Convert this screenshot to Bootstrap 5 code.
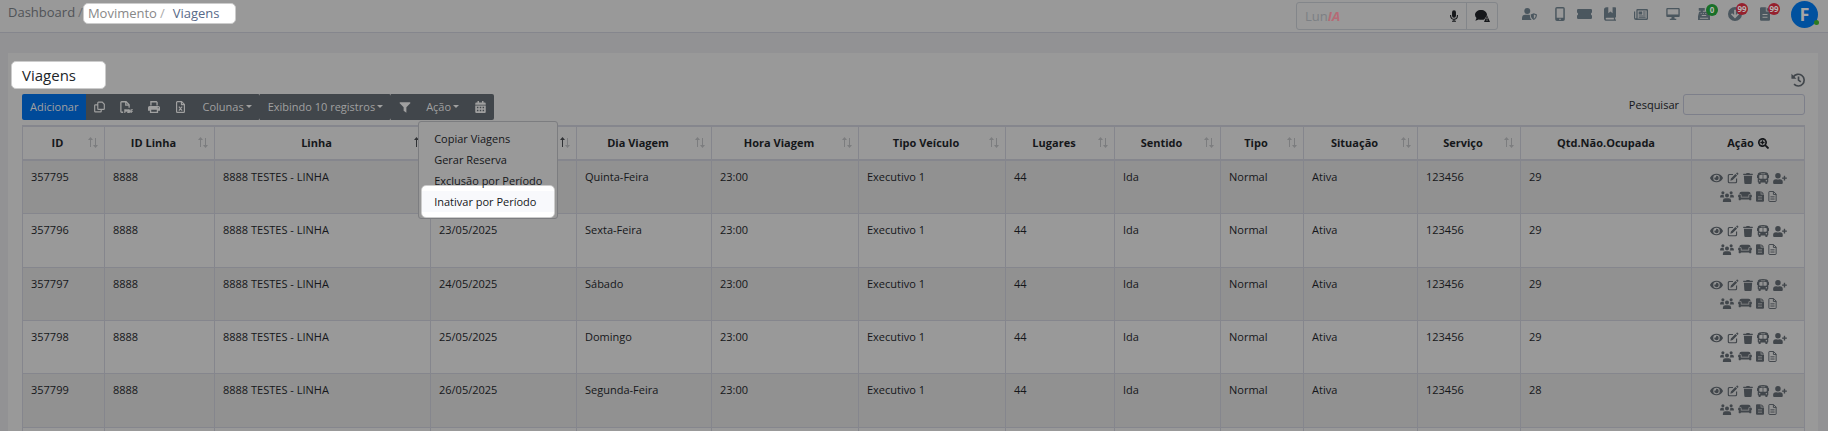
<!DOCTYPE html>
<html lang="pt-BR">
<head>
<meta charset="utf-8">
<meta name="viewport" content="width=device-width, initial-scale=1">
<title>Viagens</title>
<link href="https://cdn.jsdelivr.net/npm/bootstrap@5.3.0/dist/css/bootstrap.min.css" rel="stylesheet">
<style>
  :root { --dim: #999; --page: #929294; --line: #85868d; --ink: #15171a; --icon: #4b575f; --act: #41464b; }
  body { font-family: "Open Sans", sans-serif; font-size: 11px; line-height: 16px; color: var(--ink); background: var(--page); }
  svg { display: block; fill: currentColor; flex: none; }
  .spot { background: #fff; border: 1px solid #ccc; border-radius: 5px; }

  /* top bar */
  .topbar { background: var(--dim); border-bottom: 1px solid var(--line); padding: 0 10px 0 8px; height: 33px; }
  .crumbs { font-size: 13px; line-height: 19px; padding-top: 3px; }
  .crumbs a { text-decoration: none; color: #505357; }
  .crumbs .sep { color: #6b6e72; padding: 0 0 0 3px; }
  .crumbs .spot { padding: 0 15px 0 4px; }
  .crumbs .spot a { color: #888; }
  .crumbs .spot .sep { color: #aaa; padding: 0 8px 0 3px; }
  .crumbs .spot .here { color: #586a88; }
  .ask { width: 202px; height: 28px; margin: 2px 24px 0 0; border: 1px solid #83868a; border-radius: 3px; }
  .ask label { font-size: 13px; color: #7c8084; padding-left: 8px; }
  .ask label em { color: #b56b76; font-weight: 700; }
  .ask input { border: 0; background: transparent; outline: 0; width: 0; padding: 0; }
  .bare { border: 0; background: none; padding: 0; color: inherit; position: relative; flex: none; }
  .ask .talk { border-left: 1px solid #83868a; width: 31px; }
  .tools { color: var(--icon); padding-top: 7px; gap: 18px; margin-right: 21px; }
  .tools .near { gap: 12px; }
  .pin { position: absolute; top: -4px; left: 8px; min-width: 12px; height: 12px; border-radius: 6px; font-size: 8px; line-height: 12px; font-weight: 700; color: #b4b4b4; padding: 0; background: #96202d; }
  .pin.ok { background: #187028; }
  .face { width: 27px; height: 27px; margin-top: 1px; border-radius: 50%; background: #00519f; color: #a5a5a5; font-size: 18px; line-height: 27px; font-weight: 700; }
  .face i { position: absolute; right: -1px; bottom: 3px; width: 5px; height: 5px; border-radius: 50%; background: #2c7a20; }

  /* panel */
  .panel { background: var(--dim); margin: 20px 10px 0 8px; padding: 8px 13px 20px 14px; }
  .titles { margin-bottom: 5px; }
  .titles a { color: var(--act); padding-bottom: 2px; }
  .panel h1 { font-size: 15px; line-height: 26px; margin: 0 0 0 -11px; padding: 0 29px 0 10px; color: #212529; }
  .tbar .btn { --bs-btn-font-size: 11px; --bs-btn-line-height: 16px; --bs-btn-padding-x: 8px; --bs-btn-padding-y: 5px; --bs-btn-border-width: 0; --bs-btn-border-radius: 2px;
    --bs-btn-color: #a0a0a0; --bs-btn-bg: #41464b; --bs-btn-hover-bg: #383c40; --bs-btn-active-bg: #41464b; --bs-btn-active-color: #a0a0a0; }
  .tbar > .btn, .tbar > .btn-group { margin-left: 0 !important; }
  .tbar .btn.add { --bs-btn-bg: #004a99; }
  .tbar .ico { width: 27px; height: 26px; padding: 0; display: flex; align-items: center; justify-content: center; }
  .tbar .dropdown-toggle::after { margin-left: 2px; border-top-width: 3px; border-left-width: 3px; border-right-width: 3px; vertical-align: 3px; }
  .tbar .dropdown-menu { --bs-dropdown-font-size: 11px; --bs-dropdown-min-width: 138px; --bs-dropdown-padding-y: 6px; --bs-dropdown-bg: #999; --bs-dropdown-border-color: #7c7d80; --bs-dropdown-border-radius: 3px; top: 100%; left: 0; margin-top: 1px; padding-left: 0; padding-right: 0; }
  .tbar .dropdown-item { padding: 3px 15px 2px; line-height: 16px; color: var(--ink); position: relative; }
  .tbar .picked::before { content: ""; position: absolute; z-index: -1; inset: -6px 2px; border: 1px solid #ccc; border-radius: 5px; background: linear-gradient(#fff 5px, #f8f9fc 5px, #f8f9fc 26px, #fff 26px); }
  .find input { width: 122px; height: 21px; border: 1px solid #7d7f8a; border-radius: 3px; background: transparent; padding: 0 6px; }

  /* grid */
  .trips { table-layout: fixed; margin: 5px 0 0; --bs-table-bg: transparent; --bs-table-color: var(--ink); --bs-table-striped-color: var(--ink); --bs-table-striped-bg: #919191; border-color: var(--line); }
  .trips > thead th { height: 34px; padding: 7px 20px 7px 8px; text-align: center; vertical-align: middle; border-top-width: 2px; border-bottom: 2px solid var(--line); position: relative; white-space: nowrap; }
  .trips > thead th.plain { padding-right: 8px; }
  .trips > thead th .sort { position: absolute; right: 6px; top: 10px; color: #7c7d7f; }
  .trips > thead th .sort .on { color: #303235; }
  .trips > tbody > tr { height: 53px; }
  .trips > tbody > tr:nth-child(3n+2) { height: 54px; }
  .trips td { padding: 8px; }
  .acts div { height: 18px; gap: 4px; color: var(--act); }
</style>
</head>
<body class="vh-100 overflow-hidden">

<svg width="0" height="0" class="position-absolute" aria-hidden="true">
  <symbol id="eye" viewBox="0 0 576 512"><path d="M572.5 241.400C518.300 135.600 410.900 64 288 64S57.700 135.600 3.500 241.400a32.400 32.400 0 0 0 0 29.200C57.700 376.400 165.100 448 288 448s230.300-71.600 284.500-177.400a32.400 32.400 0 0 0 0-29.200zM288 400a144 144 0 1 1 144-144 143.900 143.900 0 0 1-144 144zm0-240a95.300 95.300 0 0 0-25.300 3.800 47.900 47.900 0 0 1-66.900 66.900A95.800 95.800 0 1 0 288 160z"/></symbol>
  <symbol id="edit" viewBox="0 0 16 16"><path d="M13 1a1.500 1.500 0 0 1 2 2l-.8.9-2.200-2.200zM11.200 2.500l2.300 2.300-6 6-3 .8.700-3.100zM3 2.500h5V4H3.500a1 1 0 0 0-1 1v7.500a1 1 0 0 0 1 1H11a1 1 0 0 0 1-1V8.500h1.500V13a2 2 0 0 1-2 2H3a2 2 0 0 1-2-2V4.500a2 2 0 0 1 2-2z"/></symbol>
  <symbol id="trash" viewBox="0 0 448 512"><path d="M432 32H312l-9.400-18.700A24 24 0 0 0 281.100 0H166.800a23.700 23.700 0 0 0-21.400 13.300L136 32H16A16 16 0 0 0 0 48v32a16 16 0 0 0 16 16h416a16 16 0 0 0 16-16V48a16 16 0 0 0-16-16zM53.200 467a48 48 0 0 0 47.900 45h245.800a48 48 0 0 0 47.900-45L416 128H32z"/></symbol>
  <symbol id="bus" viewBox="0 0 512 512"><path fill-rule="evenodd" d="M488 128h-8V80c0-44.800-99.200-80-224-80S32 35.200 32 80v48h-8a24 24 0 0 0-24 24v80a24 24 0 0 0 24 24h8v160a32 32 0 0 0 32 32v32a32 32 0 0 0 32 32h32a32 32 0 0 0 32-32v-32h192v32a32 32 0 0 0 32 32h32a32 32 0 0 0 32-32v-32h6a32 32 0 0 0 26-32V256h8a24 24 0 0 0 24-24v-80a24 24 0 0 0-24-24zM160 72a8 8 0 0 1 8-8h176a8 8 0 0 1 8 8v16a8 8 0 0 1-8 8H168a8 8 0 0 1-8-8zM112 400a32 32 0 1 1 0-64 32 32 0 0 1 0 64zm128-112H128a32 32 0 0 1-32-32v-96a32 32 0 0 1 32-32h112zm32 0V128h112a32 32 0 0 1 32 32v96a32 32 0 0 1-32 32zm128 112a32 32 0 1 1 0-64 32 32 0 0 1 0 64z"/></symbol>
  <symbol id="uplus" viewBox="0 0 640 512"><path d="M624 208h-64v-64a16 16 0 0 0-16-16h-32a16 16 0 0 0-16 16v64h-64a16 16 0 0 0-16 16v32a16 16 0 0 0 16 16h64v64a16 16 0 0 0 16 16h32a16 16 0 0 0 16-16v-64h64a16 16 0 0 0 16-16v-32a16 16 0 0 0-16-16zM224 256a128 128 0 1 0 0-256 128 128 0 0 0 0 256zm89.600 32h-16.700a174 174 0 0 1-145.800 0h-16.700A134.400 134.400 0 0 0 0 422.400V464a48 48 0 0 0 48 48h352a48 48 0 0 0 48-48v-41.600A134.400 134.400 0 0 0 313.600 288z"/></symbol>
  <symbol id="users" viewBox="0 0 20 16"><circle cx="4" cy="2.600" r="2.200"/><circle cx="16" cy="2.600" r="2.200"/><circle cx="10" cy="6.500" r="2.900"/><path d="M0 9.500V8a2.500 2.500 0 0 1 2.500-2.500h2.800a5 5 0 0 0 .8 4zM20 9.500V8a2.500 2.500 0 0 0-2.500-2.500h-2.800a5 5 0 0 1-.8 4zM4 16v-2a3.500 3.500 0 0 1 3.500-3.500h5A3.500 3.500 0 0 1 16 14v2z"/></symbol>
  <symbol id="couch" viewBox="0 0 640 512"><path d="M160 224v64h320v-64a64 64 0 0 1 64-64h32a96 96 0 0 0-96-96H160a96 96 0 0 0-96 96h32a64 64 0 0 1 64 64zm416-32h-32a32 32 0 0 0-32 32v96H128v-96a32 32 0 0 0-32-32H64a64 64 0 0 0-32 119.200V432a16 16 0 0 0 16 16h64a16 16 0 0 0 16-16v-16h384v16a16 16 0 0 0 16 16h64a16 16 0 0 0 16-16V311.200A64 64 0 0 0 576 192z"/></symbol>
  <symbol id="file" viewBox="0 0 12 16"><path fill-rule="evenodd" d="M1.500 0H7v5h5v9.500a1.500 1.500 0 0 1-1.500 1.500h-9A1.500 1.500 0 0 1 0 14.500v-13A1.500 1.500 0 0 1 1.500 0zM8 0l4 4H8zM3 8v1.300h6V8zm0 3.200v1.300h6v-1.300z"/></symbol>
  <symbol id="fileo" viewBox="0 0 12 16"><path fill="none" stroke="currentColor" stroke-width="1.400" d="M1.500.7h6l3.800 3.800v9.800a1 1 0 0 1-1 1H1.700a1 1 0 0 1-1-1V1.700a1 1 0 0 1 1-1M7.300 1v4h4M3 8.500h6M3 11.700h6"/></symbol>
  <symbol id="zoomin" viewBox="0 0 512 512"><path fill-rule="evenodd" d="M505 442.700 405.300 343a24 24 0 0 0-17-7H372a208 208 0 1 0-36 36v16.300a24 24 0 0 0 7 17l99.700 99.700a23.900 23.900 0 0 0 33.900 0l28.300-28.300a24.100 24.100 0 0 0 .1-34zM208 338a130 130 0 1 1 0-260 130 130 0 0 1 0 260zM176 110h64v66h66v64h-66v66h-64v-66h-66v-64h66z"/></symbol>
  <symbol id="history" viewBox="0 0 16 16"><path fill="none" stroke="currentColor" stroke-width="1.900" d="M2.600 4.600A6.700 6.700 0 1 1 3.500 12.800M8.600 4v4.200l2.600 2"/><path d="M.5.800v5.700h5.700z"/></symbol>
  <symbol id="copy" viewBox="0 0 16 16"><path fill="none" stroke="currentColor" stroke-width="1.700" d="M6.500 1h5.500l3 3v6.500a1 1 0 0 1-1 1H6.500a1 1 0 0 1-1-1V2a1 1 0 0 1 1-1zM5 4.800H2a1 1 0 0 0-1 1V14a1 1 0 0 0 1 1h7.500a1 1 0 0 0 1-1v-2"/></symbol>
  <symbol id="pdf" viewBox="0 0 17 16"><path fill="none" stroke="currentColor" stroke-width="1.700" d="M4 15H2a1 1 0 0 1-1-1V2a1 1 0 0 1 1-1h6l4 4v4M7.500 1v4.500H12"/><path d="M5.500 11h2.600a1.600 1.600 0 0 1 0 3.200H7V16H5.500zM9.500 11h2a2.500 2.500 0 0 1 0 5h-2zM14 11h3v1.400h-1.500v.8H17v1.200h-1.500V16H14z"/></symbol>
  <symbol id="print" viewBox="0 0 16 16"><path fill-rule="evenodd" d="M3 0h8.500L13 1.500V6h-1.800V2H4.800v4H3zM2 6.500h12a2 2 0 0 1 2 2V13h-2.500v3h-11v-3H0V8.500a2 2 0 0 1 2-2zm2.300 5v2.800h7.400v-2.800zM13 8.300v1.400h1.300V8.300z"/></symbol>
  <symbol id="xls" viewBox="0 0 12 16"><path fill="none" stroke="currentColor" stroke-width="1.600" d="M1.800.8h5.700l3.700 3.700v9.700a1 1 0 0 1-1 1H1.800a1 1 0 0 1-1-1V1.800a1 1 0 0 1 1-1M7.300 1v3.700h4M3.800 7.500l4.400 5.200M8.200 7.500l-4.400 5.200"/></symbol>
  <symbol id="filter" viewBox="0 0 16 16"><path d="M.8.500h14.400a.7.700 0 0 1 .5 1.200L10 7.800V15.500L6 12.700V7.800L.3 1.700A.7.700 0 0 1 .8.500z"/></symbol>
  <symbol id="cal" viewBox="0 0 14 16"><path fill-rule="evenodd" d="M3 0h2v2h4V0h2v2h1.500A1.500 1.500 0 0 1 14 3.500V5H0V3.500A1.500 1.500 0 0 1 1.500 2H3zM0 6h14v8.500a1.500 1.500 0 0 1-1.500 1.500h-11A1.500 1.500 0 0 1 0 14.500zm2.200 1.700v2h2v-2zm3.800 0v2h2v-2zm3.800 0v2h2v-2zm-7.600 4v2h2v-2zm3.800 0v2h2v-2zm3.800 0v2h2v-2z"/></symbol>
  <symbol id="up" viewBox="0 0 5 11"><path d="M2.500 0 5 3H3v7H2V3H0z"/></symbol>
  <symbol id="down" viewBox="0 0 5 11"><path d="M2.500 11 5 8H3V1H2v7H0z"/></symbol>
  <symbol id="mic" viewBox="0 0 11 16"><path d="M5.500 0a2.700 2.700 0 0 1 2.700 2.700v5a2.700 2.700 0 0 1-5.400 0v-5A2.700 2.700 0 0 1 5.500 0z"/><path fill="none" stroke="currentColor" stroke-width="1.500" d="M.8 6.500v1.300a4.700 4.700 0 0 0 9.400 0V6.500M5.500 12.500v2.800M2.800 15.200h5.400"/></symbol>
  <symbol id="chat" viewBox="0 0 20 16"><path d="M8 0c4.400 0 8 2.800 8 6.300l-.4 1.200-3.300 5.300A10 10 0 0 1 8 13c-1 0-2-.2-3-.5L.5 14.300 2 10.700A5.800 5.800 0 0 1 0 6.300C0 2.800 3.600 0 8 0z"/><path fill-rule="evenodd" d="M16 7l4 9h-8zm-.6 3v2.800h1.200V10zm0 3.600v1.200h1.200v-1.200z"/></symbol>
  <symbol id="shield" viewBox="0 0 20 16"><circle cx="7" cy="4" r="4"/><path d="M0 16v-2.500A4.500 4.500 0 0 1 4.500 9h5l1 .2c0 2.800.6 5 2.500 6.800z"/><path fill-rule="evenodd" d="M15.800 7 20 8.700c0 3.500-1.400 6-4.200 7.300-2.800-1.300-4.200-3.800-4.200-7.300zm0 1.800v5.400c1.600-1 2.400-2.500 2.500-4.500z"/></symbol>
  <symbol id="phone" viewBox="0 0 11 16"><path fill-rule="evenodd" d="M2 0h7a2 2 0 0 1 2 2v12a2 2 0 0 1-2 2H2a2 2 0 0 1-2-2V2a2 2 0 0 1 2-2zm-.3 1.700v10.600h7.600V1.700zm2.800 11.600v1.400h2v-1.400z"/></symbol>
  <symbol id="ticket" viewBox="0 0 18 12"><path d="M1.500 0h15A1.500 1.500 0 0 1 18 1.500v2.700a1.900 1.900 0 0 0 0 3.600v2.700a1.500 1.500 0 0 1-1.500 1.500h-15A1.500 1.500 0 0 1 0 10.500V7.800a1.900 1.900 0 0 0 0-3.600V1.500A1.500 1.500 0 0 1 1.500 0z"/></symbol>
  <symbol id="book" viewBox="0 0 14 16"><path fill-rule="evenodd" d="M3 0h2v7l2.500-2L10 7V0h3a1 1 0 0 1 1 1v10.500l-1 1v2h1V16H3a3 3 0 0 1-3-3V3a3 3 0 0 1 3-3zm0 12.300a1 1 0 0 0 0 2h8.500v-2z"/></symbol>
  <symbol id="news" viewBox="0 0 18 16"><path fill-rule="evenodd" d="M4.500 1h12A1.500 1.500 0 0 1 18 2.500v11a1.500 1.500 0 0 1-1.500 1.500h-14A2.500 2.500 0 0 1 0 12.500V4h1.500v8.500a1 1 0 0 0 1.500 0v-10A1.500 1.500 0 0 1 4.500 1zm.2 1.700v10.600h11.600V2.700zM6 4h4.500v4H6zm5.700 0H15v1.300h-3.300zm0 2.700H15V8h-3.300zM6 9.300h9v1.300H6zm0 2h9v1H6z"/></symbol>
  <symbol id="screen" viewBox="0 0 18 16"><path fill-rule="evenodd" d="M1.500 0h15A1.500 1.500 0 0 1 18 1.500v9a1.500 1.500 0 0 1-1.500 1.500h-5.700l.5 2.300h2V16H4.700v-1.700h2L7.200 12H1.500A1.500 1.500 0 0 1 0 10.500v-9A1.500 1.500 0 0 1 1.500 0zm.3 1.800v7h14.400v-7z"/></symbol>
  <symbol id="till" viewBox="0 0 16 16"><path fill-rule="evenodd" d="M1 0h8v3.500H6.500V5H14.500l1.500 6v5H0v-5l1.500-6h2V3.500H1zm2.500 6.500v1.300H5V6.500zm3 0v1.300H8V6.500zm3 0v1.300H11V6.500zM5 9.200v1.300h6V9.200zM2.500 13v1.200h11V13z"/></symbol>
  <symbol id="dl" viewBox="0 0 16 16"><path fill-rule="evenodd" d="M8 0a8 8 0 1 1 0 16A8 8 0 0 1 8 0zM7 3v6.200L4.700 7 3.300 8.300 8 13l4.700-4.700L11.300 7 9 9.200V3z"/></symbol>
</svg>

<header class="topbar d-flex align-items-start">
  <nav class="crumbs d-flex" aria-label="breadcrumb">
    <a href="#">Dashboard</a><span class="sep">/</span>
    <span class="spot d-flex"><a href="#">Movimento</a><span class="sep">/</span><a href="#" class="here">Viagens</a></span>
  </nav>
  <div class="ask d-flex align-items-center ms-auto">
    <label for="ask">Lun<em>IA</em></label>
    <input id="ask" type="text" class="flex-grow-1">
    <button class="bare me-2" aria-label="Voz"><svg width="8" height="12"><use href="#mic"/></svg></button>
    <button class="bare talk h-100 d-flex align-items-center justify-content-center" aria-label="Conversa"><svg width="15" height="12"><use href="#chat"/></svg></button>
  </div>
  <div class="tools d-flex align-items-center">
    <button class="bare" aria-label="Perfil"><svg width="15" height="12"><use href="#shield"/></svg></button>
    <div class="near d-flex align-items-center">
      <button class="bare" aria-label="Celular"><svg width="10" height="14"><use href="#phone"/></svg></button>
      <button class="bare" aria-label="Bilhetes"><svg width="15" height="10"><use href="#ticket"/></svg></button>
      <button class="bare" aria-label="Manual"><svg width="12" height="14"><use href="#book"/></svg></button>
    </div>
    <button class="bare" aria-label="Notícias"><svg width="14" height="13"><use href="#news"/></svg></button>
    <button class="bare" aria-label="Monitor"><svg width="14" height="12"><use href="#screen"/></svg></button>
    <button class="bare" aria-label="Caixa"><svg width="12" height="12"><use href="#till"/></svg><span class="pin ok">0</span></button>
    <button class="bare" aria-label="Downloads"><svg width="14" height="14"><use href="#dl"/></svg><span class="pin">99</span></button>
    <button class="bare" aria-label="Relatórios"><svg width="10" height="14"><use href="#file"/></svg><span class="pin">99</span></button>
  </div>
  <button class="bare face" aria-label="Usuário">F<i></i></button>
</header>

<main class="panel">
  <div class="titles d-flex justify-content-between align-items-end">
    <h1 class="spot">Viagens</h1>
    <a href="#" aria-label="Histórico"><svg width="14" height="14"><use href="#history"/></svg></a>
  </div>
  <div class="d-flex justify-content-between align-items-start">
    <div class="tbar btn-group" role="group">
      <button class="btn add">Adicionar</button>
      <button class="btn ico" aria-label="Copiar"><svg width="11" height="12"><use href="#copy"/></svg></button>
      <button class="btn ico" aria-label="PDF"><svg width="13" height="12"><use href="#pdf"/></svg></button>
      <button class="btn ico" aria-label="Imprimir"><svg width="12" height="12"><use href="#print"/></svg></button>
      <button class="btn ico" aria-label="Excel"><svg width="9" height="12"><use href="#xls"/></svg></button>
      <button class="btn dropdown-toggle">Colunas</button>
      <button class="btn dropdown-toggle">Exibindo 10 registros</button>
      <button class="btn ico" aria-label="Filtrar"><svg width="12" height="11"><use href="#filter"/></svg></button>
      <div class="btn-group">
        <button class="btn dropdown-toggle" aria-expanded="true">Ação</button>
        <ul class="dropdown-menu show">
          <li><a class="dropdown-item" href="#">Copiar Viagens</a></li>
          <li><a class="dropdown-item" href="#">Gerar Reserva</a></li>
          <li><a class="dropdown-item" href="#">Exclusão por Período</a></li>
          <li><a class="dropdown-item picked" href="#">Inativar por Período</a></li>
        </ul>
      </div>
      <button class="btn ico" aria-label="Calendário"><svg width="11" height="12"><use href="#cal"/></svg></button>
    </div>
    <div class="find d-flex align-items-center gap-1">
      <label for="find">Pesquisar</label>
      <input id="find" type="search">
    </div>
  </div>

  <table class="table table-bordered table-striped trips">
    <colgroup>
      <col width="82"><col width="110"><col width="216"><col width="146"><col width="135"><col width="147"><col width="147"><col width="109"><col width="106"><col width="83"><col width="114"><col width="103"><col width="171"><col width="113">
    </colgroup>
    <thead><tr id="heads"></tr></thead>
    <tbody id="rows"></tbody>
  </table>
</main>

<script src="https://cdn.jsdelivr.net/npm/bootstrap@5.3.0/dist/js/bootstrap.bundle.min.js"></script>
<script>
  const icon = (id, w, h, cls = '') => `<svg class="${cls}" width="${w}" height="${h}"><use href="#${id}"/></svg>`;
  const act = ([id, w, h, label]) => `<button class="bare" aria-label="${label}">${icon(id, w, h)}</button>`;

  // The grid is sorted by the third and fourth columns, so their up arrows are dark.
  const heads = ['ID', 'ID Linha', 'Linha', '', 'Dia Viagem', 'Hora Viagem', 'Tipo Veículo', 'Lugares', 'Sentido', 'Tipo', 'Situação', 'Serviço'];
  document.getElementById('heads').innerHTML = heads.map((h, i) =>
    `<th scope="col">${h}<span class="sort d-flex">${icon('up', 5, 11, i === 2 || i === 3 ? 'on' : '')}${icon('down', 5, 11)}</span></th>`).join('')
    + `<th scope="col" class="plain">Qtd.Não.Ocupada</th><th scope="col" class="plain"><span class="d-flex justify-content-center align-items-center">Ação<span class="ms-1">${icon('zoomin', 11, 11)}</span></span></th>`;

  const top5 = [['eye', 13, 12, 'Ver'], ['edit', 12, 12, 'Editar'], ['trash', 10, 11, 'Excluir'], ['bus', 12, 12, 'Veículo'], ['uplus', 14, 11, 'Adicionar passageiro']];
  const low4 = [['users', 14, 11, 'Passageiros'], ['couch', 14, 12, 'Poltronas'], ['file', 8, 11, 'Relatório'], ['fileo', 9, 11, 'Documento']];
  const acts = `<div class="d-flex justify-content-center align-items-center">${top5.map(act).join('')}</div><div class="d-flex justify-content-center align-items-center">${low4.map(act).join('')}</div>`;
  const trips = [
    [357795, '', 'Quinta-Feira', 29],
    [357796, '23/05/2025', 'Sexta-Feira', 29],
    [357797, '24/05/2025', 'Sábado', 29],
    [357798, '25/05/2025', 'Domingo', 29],
    [357799, '26/05/2025', 'Segunda-Feira', 28]
  ];
  document.getElementById('rows').innerHTML = trips.map(([id, date, day, free]) =>
    '<tr>' + [id, 8888, '8888 TESTES - LINHA', date, day, '23:00', 'Executivo 1', 44, 'Ida', 'Normal', 'Ativa', 123456, free]
      .map(v => `<td>${v}</td>`).join('') + `<td class="acts">${acts}</td></tr>`).join('')
    + '<tr>' + '<td></td>'.repeat(14) + '</tr>';
</script>
</body>
</html>
